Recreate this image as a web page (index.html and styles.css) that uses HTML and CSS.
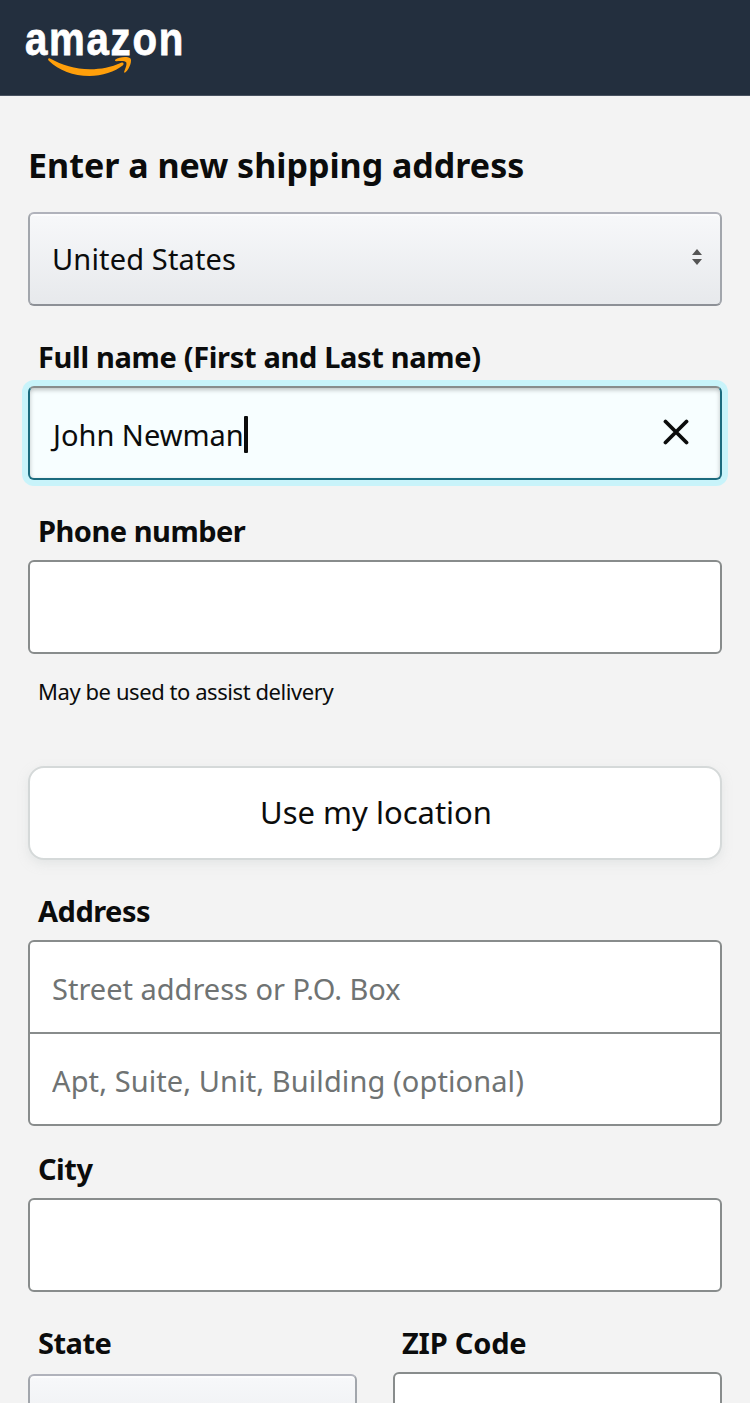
FILE: index.html
```html
<!DOCTYPE html>
<html lang="en">

<head>
    <meta charset="UTF-8">
    <meta name="viewport" content="width=device-width, initial-scale=1.0">
    <title>Enter a new shipping address</title>
    <link rel="stylesheet" href="styles.css">
</head>

<body>
    <!-- Header -->
    <header class="header">
        <svg class="logo" width="160" height="56" viewBox="0 0 160 56" role="img" aria-label="amazon">
            <text class="logo-text" x="0" y="32" textLength="160" lengthAdjust="spacingAndGlyphs">amazon</text>
            <path class="logo-smile" d="M23.5 35.5 C23 36 22.8 36.8 23.8 37.8 C34 47.5 48 53 64.500 53 C77 53 90 48.8 98 42.200 C99.500 40.800 98.200 38.800 96.200 39.800 C86 44.300 76 46.300 65 46.300 C50 46.300 37 42.200 25 35.600 C24.400 35.200 23.900 35.200 23.500 35.500 Z"/>
            <path class="logo-smile" d="M90.500 36.500 C93.500 34.200 102 33 105.300 35.300 C107.300 37 105 45.500 100.500 49.300 C99.600 50 98.800 49.600 99.200 48.600 C100.200 46 102.200 41.500 101.200 39.300 C100 37.400 94.500 37.900 91.500 38.200 C90.100 38.300 89.500 37.300 90.500 36.500 Z"/>
        </svg>
    </header>

    <!-- Address form -->
    <form class="address-form">
        <h1>Enter a new shipping address</h1>
        <div class="select country">
            <span class="country-name">United States</span>
            <svg class="arrows" width="10" height="16" viewBox="0 0 10 16">
                <path d="M5 0 L10 6 H0 Z M0 10 H10 L5 16 Z" fill="#555"/>
            </svg>
        </div>

        <label class="label-name">Full name (First and Last name)</label>
        <div class="input focused">
            <span class="name-value">John Newman</span>
            <span class="caret"></span>
            <svg class="clear" width="26" height="26" viewBox="0 0 26 26">
                <path d="M2.500 2.500 L23.500 23.500 M23.500 2.500 L2.500 23.500" stroke="#0b0c0c" stroke-width="3.800" stroke-linecap="round"/>
            </svg>
        </div>

        <label class="label-phone" for="phone">Phone number</label>
        <input class="input" type="tel" id="phone">
        <p class="help">May be used to assist delivery</p>

        <button class="location-button" type="button">Use my location</button>

        <label class="label-address" for="street">Address</label>
        <div class="input-group">
            <input class="input street" type="text" id="street" placeholder="Street address or P.O. Box">
            <input class="input apt" type="text" placeholder="Apt, Suite, Unit, Building (optional)">
        </div>

        <label class="label-city" for="city">City</label>
        <input class="input" type="text" id="city">

        <div class="row">
            <div class="col">
                <label class="label-state">State</label>
                <div class="select state"></div>
            </div>
            <div class="col">
                <label class="label-zip" for="zip">ZIP Code</label>
                <input class="input" type="text" id="zip">
            </div>
        </div>
    </form>
</body>

</html>
```
FILE: styles.css
```css
* {
    box-sizing: border-box;
}

body {
    margin: 0;
    height: 1403px;
    overflow: hidden;
    background: #f3f3f3;
    color: #0b0c0c;
    font-family: "Noto Sans", "Open Sans", sans-serif;
    font-size: 29px;
}

/* Header */
.header {
    height: 96px;
    padding: 23px 25px;
    background: #232f3e;
    border-bottom: 1px solid #485260;
}

.logo {
    display: block;
    overflow: visible;
}

.logo-text {
    font-family: "Liberation Sans", Arial, sans-serif;
    font-size: 47px;
    font-weight: bold;
    letter-spacing: 2px;
    fill: #fff;
    stroke: #fff;
    stroke-width: 0.8px;
}

.logo-smile {
    fill: #ff9f0a;
}

/* Form */
.address-form {
    height: 1307px;
    padding: 0 28px;
    overflow: hidden;
}

h1 {
    margin: 0;
    padding: 45px 0 23px;
    font-size: 34px;
    line-height: 48px;
    white-space: nowrap;
}

label {
    display: block;
    height: 80px;
    padding: 30px 10px 0;
    font-size: 29px;
    font-weight: bold;
    line-height: 42px;
    letter-spacing: -0.5px;
    white-space: nowrap;
}

.label-name {
    letter-spacing: -0.33px;
}

.label-city {
    height: 72px;
    padding-top: 22px;
}

.label-zip {
    padding-left: 9px;
    letter-spacing: -0.2px;
}

.select,
.input {
    display: flex;
    align-items: center;
    width: 100%;
    height: 94px;
    padding: 2px 22px 0;
    border: 2px solid #888c8c;
    border-radius: 6px;
    color: #0b0c0c;
    white-space: nowrap;
}

.select {
    padding: 0 22px 2px;
    background: linear-gradient(#f7f8fa, #e7e9ec);
    border-color: #b0b2bb #a2a6ac #8d9096;
    box-shadow: inset 0 2px 0 rgba(255, 255, 255, 0.6);
}

.country-name {
    letter-spacing: 0.15px;
}

.arrows {
    margin: -2px -4px 0 auto;
}

.input {
    background: #fff;
    font-family: inherit;
    font-size: 29px;
    outline: none;
}

.input::placeholder {
    color: #6f7373;
    opacity: 1;
}

.focused {
    background: #f7feff;
    border-color: #888c8c #1b6b7e #1b6b7e;
    box-shadow: 0 0 0 6px #c8f3fa, inset 0 2px 4px rgba(15, 17, 17, 0.25);
}

.name-value {
    margin-left: 1px;
}

.caret {
    width: 4px;
    height: 37px;
    border-radius: 1px;
    background: #0b0c0c;
}

.clear {
    margin: -5px 9px 0 auto;
}

.help {
    margin: 0;
    padding: 21px 10px 0;
    height: 112px;
    font-size: 22px;
    line-height: 32px;
    letter-spacing: -0.43px;
    white-space: nowrap;
}

.location-button {
    display: block;
    width: 100%;
    height: 94px;
    padding: 0 0 2px 2px;
    border: 2px solid #d5d9d9;
    border-radius: 16px;
    background: #fff;
    box-shadow: 0 4px 10px rgba(213, 217, 217, 0.5);
    color: #0b0c0c;
    font-family: inherit;
    font-size: 31px;
}

.input-group .street {
    border-radius: 6px 6px 0 0;
}

.input-group .apt {
    margin-top: -2px;
    border-radius: 0 0 6px 6px;
    letter-spacing: 0.1px;
}

.row {
    display: grid;
    grid-template-columns: 329px 329px;
    justify-content: space-between;
}

.state {
    margin-top: 2px;
}
```
